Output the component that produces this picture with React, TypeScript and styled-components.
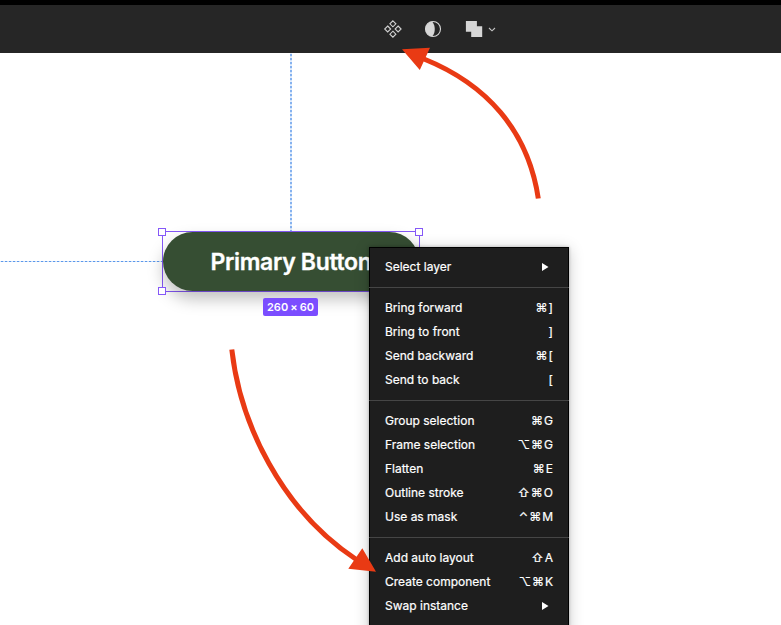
import React from "react";
import styled, { createGlobalStyle } from "styled-components";

const GlobalStyle = createGlobalStyle`
  * { box-sizing: border-box; }
  body { margin: 0; overflow: hidden; background: #fff; }
  svg { display: block; }
`;

const Editor = styled.div`
  position: relative;
  display: flex;
  flex-direction: column;
  width: 781px;
  height: 625px;
  overflow: hidden;
  background: #fff;
  font-family: Inter, "Liberation Sans", sans-serif;
`;

const Toolbar = styled.header`
  display: flex;
  align-items: center;
  gap: 20px;
  height: 53px;
  flex: none;
  padding-left: 383px;
  border-top: 5px solid #000;
  background: #262626;
`;

const ToolGroup = styled.div`
  display: flex;
  align-items: center;
  gap: 4px;
`;

const Canvas = styled.main`
  position: relative;
  flex: 1;
`;

const Guide = styled.div<{ $vertical?: boolean }>`
  position: absolute;
  left: ${(p) => (p.$vertical ? 290 : 0)}px;
  top: ${(p) => (p.$vertical ? 0 : 208)}px;
  width: ${(p) => (p.$vertical ? "2px" : "162px")};
  height: ${(p) => (p.$vertical ? "178px" : "1px")};
  opacity: ${(p) => (p.$vertical ? 0.75 : 1)};
  background: repeating-linear-gradient(
    ${(p) => (p.$vertical ? "180deg" : "90deg")},
    #dbe8fb 0 1px,
    #5c98ea 1px 3px,
    #c4daf8 3px 4px
  );
`;

const Selection = styled.div`
  position: absolute;
  left: 162px;
  top: 178px;
  width: 258px;
  height: 61px;
  border: 1px solid #8558f8;
`;

const PrimaryButton = styled.button`
  display: flex;
  align-items: center;
  justify-content: center;
  width: 256px;
  height: 59px;
  padding: 1px 0 0;
  border: 0;
  border-radius: 30px;
  background: #364e33;
  box-shadow: 0 8px 16px rgba(0, 0, 0, 0.25);
  color: #fff;
  font: 600 23px/28px Inter, sans-serif;
  letter-spacing: -0.33px;
  -webkit-text-stroke: 0.3px #fff;
  white-space: nowrap;
`;

const Handle = styled.i<{ $right?: boolean; $bottom?: boolean }>`
  position: absolute;
  width: 8px;
  height: 8px;
  ${(p) => (p.$right ? "right: -4px" : "left: -5px")};
  ${(p) => (p.$bottom ? "bottom: -4px" : "top: -4px")};
  border: 1px solid #8558f8;
  background: #fff;
`;

const SizeBadge = styled.div`
  position: absolute;
  left: 263px;
  top: 245px;
  width: 55px;
  height: 18px;
  border-radius: 2px;
  background: #7b4dff;
  color: #fff;
  font-size: 11px;
  font-weight: 600;
  letter-spacing: 0.05px;
  word-spacing: -0.8px;
  line-height: 18px;
  text-align: center;
  white-space: nowrap;
`;

const Menu = styled.nav`
  position: absolute;
  left: 369px;
  top: 194px;
  width: 200px;
  height: 390px;
  background: #1e1e1e;
  box-shadow: inset 0 0 0 1px #000, 0 2px 14px rgba(0, 0, 0, 0.22), 0 0 3px rgba(0, 0, 0, 0.25);
  color: #fff;
  font-size: 12px;
  -webkit-text-stroke: 0.2px #fff;
`;

const MenuSection = styled.section`
  padding: 8px 16px;

  & + & {
    border-top: 1px solid #464646;
  }
`;

const MenuRow = styled.div`
  display: flex;
  align-items: center;
  justify-content: space-between;
  height: 24px;
  line-height: 24px;
  white-space: nowrap;
`;

const Shortcut = styled.span`
  margin-right: -1px;
  letter-spacing: 1px;
`;

const SubmenuArrow = styled.svg`
  margin-right: 4px;
`;

const Annotations = styled.svg`
  position: absolute;
  inset: 0;
  pointer-events: none;
`;

type Item = { label: string; keys?: string };

const sections: Item[][] = [
  [{ label: "Select layer" }],
  [
    { label: "Bring forward", keys: "⌘]" },
    { label: "Bring to front", keys: "]" },
    { label: "Send backward", keys: "⌘[" },
    { label: "Send to back", keys: "[" },
  ],
  [
    { label: "Group selection", keys: "⌘G" },
    { label: "Frame selection", keys: "⌥⌘G" },
    { label: "Flatten", keys: "⌘E" },
    { label: "Outline stroke", keys: "⇧⌘O" },
    { label: "Use as mask", keys: "⌃⌘M" },
  ],
  [
    { label: "Add auto layout", keys: "⇧A" },
    { label: "Create component", keys: "⌥⌘K" },
    { label: "Swap instance" },
  ],
];

const ComponentIcon = () => (
  <svg width="20" height="20" viewBox="0 0 20 20" fill="none" stroke="#d0d0d0" strokeWidth="1.1">
    <path d="M9.9 1.8l3 3-3 3-3-3zM4.7 7l3 3-3 3-3-3zM15.1 7l3 3-3 3-3-3zM9.9 12.2l3 3-3 3-3-3z" />
  </svg>
);

const MaskIcon = () => (
  <svg width="20" height="20" viewBox="0 0 20 20">
    <circle cx="10" cy="10" r="7.5" fill="none" stroke="#d6d6d6" strokeWidth="1.1" />
    <path d="M9.2 2.4a7.65 7.65 0 0 0 0 15.2C12.6 13.5 12.6 6.5 9.2 2.4z" fill="#d6d6d6" />
  </svg>
);

const UnionIcon = () => (
  <svg width="20" height="20" viewBox="0 0 20 20">
    <path d="M2.9 1.9h11v5.3h5.3v10.9h-11v-5.3H2.9z" fill="#d6d6d6" />
  </svg>
);

const ChevronIcon = () => (
  <svg width="10" height="10" viewBox="0 0 10 10" fill="none" stroke="#c4c4c4" strokeWidth="1.1">
    <path d="M2 4l3 2.8L8 4" />
  </svg>
);

export default function App() {
  return (
    <Editor>
      <GlobalStyle />
      <Toolbar>
        <ComponentIcon />
        <MaskIcon />
        <ToolGroup>
          <UnionIcon />
          <ChevronIcon />
        </ToolGroup>
      </Toolbar>
      <Canvas>
        <Guide $vertical />
        <Guide />
        <Selection>
          <PrimaryButton>Primary Button</PrimaryButton>
          <Handle />
          <Handle $right />
          <Handle $bottom />
          <Handle $right $bottom />
        </Selection>
        <SizeBadge>260 × 60</SizeBadge>
        <Menu>
          {sections.map((items, i) => (
            <MenuSection key={i}>
              {items.map(({ label, keys }) => (
                <MenuRow key={label}>
                  <span>{label}</span>
                  {keys ? (
                    <Shortcut>{keys}</Shortcut>
                  ) : (
                    <SubmenuArrow width="8" height="8" viewBox="0 0 8 8">
                      <path d="M1 0l6.5 4L1 8z" fill="#fff" />
                    </SubmenuArrow>
                  )}
                </MenuRow>
              ))}
            </MenuSection>
          ))}
        </Menu>
      </Canvas>
      <Annotations width="781" height="625" viewBox="0 0 781 625">
        <g fill="none" stroke="#e93a14" strokeWidth="5">
          <path d="M538.3 198.5C528 130 486 84 424 59" />
          <path d="M231.8 349.5C240 423 281 510 357 560" />
        </g>
        <path d="M402 49.3L430 47.8 419.8 70zM376 571.8L362.3 548.3 348.3 568.7z" fill="#e93a14" />
      </Annotations>
    </Editor>
  );
}
